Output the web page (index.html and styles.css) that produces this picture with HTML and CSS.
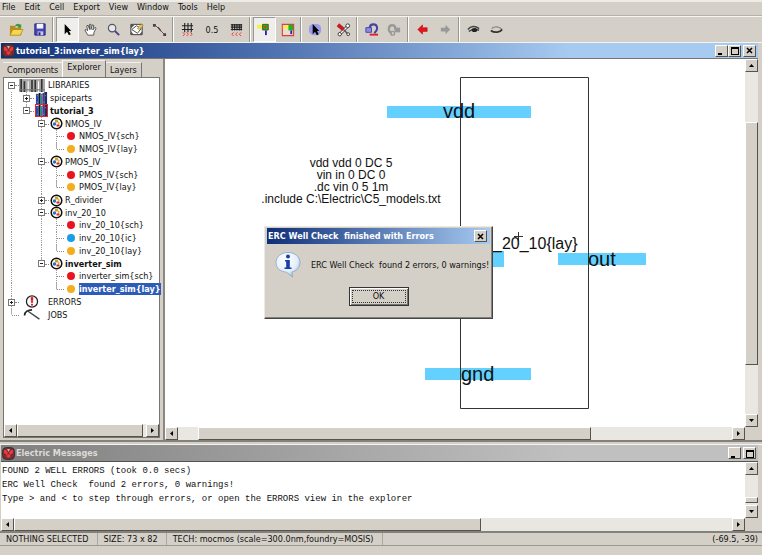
FILE: index.html
```html
<!DOCTYPE html>
<html lang="en">
<head>
<meta charset="utf-8">
<title>Electric</title>
<link rel="stylesheet" href="styles.css">
</head>
<body>
<svg class="defs" aria-hidden="true">
  <symbol id="cell" viewBox="0 0 13 13"><circle cx="6.500" cy="6.500" r="5.300" fill="#fff" stroke="#111" stroke-width="1.500"/><path d="M5 2.500h3v3H5z" fill="#c9a22e"/><circle cx="4.500" cy="7" r="1.700" fill="#2472c8"/><path d="M8 4l2 2-2 2z" fill="#d8b92c"/><path d="M6.500 7.500h3v2h-3z" fill="#e21c1c"/></symbol>
  <symbol id="books" viewBox="0 0 12 14"><path fill="#2347b8" d="M0 2h3v12H0z"/><path fill="#171717" d="M3 1h2v13H3z"/><path fill="#178a86" d="M5 2h2v12H5z"/><path fill="#602b91" d="M7 1h2v13H7z"/><path fill="#1a2c6c" d="M9 0h3v13H9z"/><path d="M1 4h1M6 4h1M10 4h1M1 11h1M8 11h1" stroke="#e09a36"/></symbol>
  <symbol id="logo" viewBox="0 0 13 13"><rect x=".5" y=".5" width="12" height="12" rx="4" fill="#7a2a30" stroke="#343434"/><path d="M2 3h2l2 3-1 2-3-2zM11 3H9L7 6l1 2 3-2z" fill="#f03838"/><path d="M5 2h3L6.500 5z" fill="#b9b9b9"/><path d="M4 9l2.500-2L9 9l-2.500 2z" fill="#f03838"/></symbol>
  <symbol id="au" viewBox="0 0 7 7"><path d="M1 5l2.500-3L6 5z"/></symbol>
  <symbol id="ad" viewBox="0 0 7 7"><path d="M1 2l2.500 3L6 2z"/></symbol>
  <symbol id="al" viewBox="0 0 7 7"><path d="M5 1L2 3.500 5 6z"/></symbol>
  <symbol id="ar" viewBox="0 0 7 7"><path d="M2 1l3 2.500L2 6z"/></symbol>
  <symbol id="min" viewBox="0 0 9 9"><path d="M1 7h4v2H1z"/></symbol>
  <symbol id="max" viewBox="0 0 9 9"><path d="M1 1h8v8H1zM2 3v5h6V3z" fill-rule="evenodd"/></symbol>
  <symbol id="cls" viewBox="0 0 9 9"><path d="M2 2l5 5M7 2L2 7" stroke="#000" stroke-width="1.500"/></symbol>
</svg>

<div class="app">
  <nav class="menubar" aria-label="Menu">
    <button>File</button><button>Edit</button><button>Cell</button><button>Export</button><button>View</button><button>Window</button><button>Tools</button><button>Help</button>
  </nav>

  <div class="toolbar" role="toolbar" aria-label="Tools">
    <button aria-label="Open"><svg viewBox="0 0 16 16"><path d="M1 4h5l1 2h6v8H1z" fill="#b98a1f"/><path d="M1 14l3-6h11l-3 6z" fill="#f4d84b" stroke="#a97c16" stroke-width=".7"/><path d="M6 5c1-3 4-4 6-2l1-1v4H9l1-1c-1-1-2-1-4 0z" fill="#3a9a35"/></svg></button>
    <button aria-label="Save"><svg viewBox="0 0 16 16"><path d="M3 2h11v12H3z" fill="#4646b4" stroke="#22227c"/><path d="M5 2h7v5H5z" fill="#f4f4ff"/><path d="M6 10h6v4H6z" fill="#c8c8ec"/><path d="M7 11h2v3H7z" fill="#22227c"/></svg></button>
    <span class="sep"></span>
    <button class="on" aria-label="Select"><svg viewBox="0 0 16 16"><path d="M5 2v11l2.500-2.500L9.500 14l2-1-2-3.500H12z"/></svg></button>
    <button aria-label="Pan"><svg viewBox="0 0 16 16"><path d="M5 14L2 8.500l1.500-.5L5 9.500 4 4l1.500-.5L7 8 7 2.500h1.500V8L10 3l1.500.5L10.500 8.500 13 5.500l1 1-2.500 5V14z" fill="#fff" stroke="#444" stroke-width=".9"/></svg></button>
    <button aria-label="Zoom"><svg viewBox="0 0 16 16"><circle cx="6.500" cy="6.500" r="4" fill="#e5e8f2" stroke="#555" stroke-width="1.200"/><path d="M9.500 9.500L14 14" stroke="#554488" stroke-width="2.200"/></svg></button>
    <button aria-label="Outline"><svg viewBox="0 0 16 16"><path d="M2 2.500h12v11H2z" fill="#fff" stroke="#333"/><path d="M3 8l5-4 5 3-4 5z" fill="#fff" stroke="#444"/><path d="M2 3h4L2 7zM2 13v-3l3 3zM14 13v-3l-3 3z" fill="#555"/><path d="M9 7l4-5 2 2-4 4z" fill="#f0c850" stroke="#8c7229" stroke-width=".6"/></svg></button>
    <button aria-label="Measure"><svg viewBox="0 0 16 16"><path d="M3 3l10 10" stroke="#a33" stroke-width="1"/><path d="M1 2h3v3H1zM12 12h3v3h-3zM6 6l1-1 3 4-1 1z" fill="#444"/></svg></button>
    <span class="sep"></span>
    <button aria-label="Grid coarser"><svg viewBox="0 0 16 16"><path d="M2 4h12M2 8h12M5 1v10M8.500 1v10M12 1v10" stroke="#222" stroke-width="1.200"/><path d="M3 11l2 2-2 2M7 11l2 2-2 2M11 11l2 2-2 2" fill="none" stroke="#e33"/></svg></button>
    <button class="wide">0.5</button>
    <button aria-label="Grid finer"><svg viewBox="0 0 16 16"><path d="M2 3h12M2 5.500h12M2 8h12M3.500 2v7M6 2v7M8.500 2v7M11 2v7M13 2v7" stroke="#222" stroke-width="1.200"/><path d="M5 11l-2 2 2 2M9 11l-2 2 2 2M13 11l-2 2 2 2" fill="none" stroke="#e33"/></svg></button>
    <span class="sep"></span>
    <button class="on" aria-label="Select objects"><svg viewBox="0 0 16 16"><path d="M0 3h7v4H0z" fill="#f5ef4b"/><path d="M6 2.500h6v6H6z" fill="#18b818" stroke="#6b4510"/><path d="M8 4.500h2v2H8z" fill="#e22"/><path d="M9.500 9v5" stroke="#2222c8" stroke-width="2"/></svg></button>
    <button aria-label="Select area"><svg viewBox="0 0 16 16"><path d="M2.500 2.500h12v12h-12z" fill="#e8dfcf" stroke="#e33b3b" stroke-width="1.200"/><path d="M3 4h6v3H3z" fill="#f5ef4b"/><path d="M9 3h5v6H9z" fill="#18b818"/><path d="M12 9v4" stroke="#2222c8" stroke-width="2"/></svg></button>
    <span class="sep"></span>
    <button aria-label="Special select"><svg viewBox="0 0 16 16"><rect x="1" y="2" width="13" height="12" rx="5" fill="#9b9bea"/><path d="M5 2v11l2.500-2.500L9.500 14l2-1-2-3.500H12z"/></svg></button>
    <span class="sep"></span>
    <button aria-label="Preferences"><svg viewBox="0 0 16 16"><path d="M12 5L4 13" stroke="#333" stroke-width="3"/><path d="M12 5L4 13" stroke="#fff" stroke-width="1.500"/><circle cx="12.500" cy="4" r="2" fill="#fff" stroke="#333"/><circle cx="4" cy="13" r="1.800" fill="#fff" stroke="#333"/><path d="M2 3l6 5" stroke="#c41b24" stroke-width="4"/><path d="M8 8l5 5" stroke="#555" stroke-width="1.500"/><circle cx="13" cy="13" r="1.500" fill="#fff" stroke="#333"/></svg></button>
    <span class="sep"></span>
    <button aria-label="Undo"><svg viewBox="0 0 16 16"><path d="M6 7c0-6 8-6 8 0 0 2-1 3-3 5" fill="none" stroke="#4343a5" stroke-width="2.200"/><path d="M2 6h6v5H2z" fill="#8b8be0" stroke="#4343a5"/><path d="M6 13.500h9" stroke="#e11d2c" stroke-width="2"/></svg></button>
    <button aria-label="Redo" disabled><svg viewBox="0 0 16 16"><path d="M9 8c0-6-7-6-7 0 0 2 1 3 3 4" fill="none" stroke="#999" stroke-width="2.500"/><path d="M8 6h6v5H8z" fill="#999"/><circle cx="6" cy="12" r="2" fill="none" stroke="#999" stroke-width="1.500"/></svg></button>
    <span class="sep"></span>
    <button aria-label="Back"><svg viewBox="0 0 16 16"><path d="M3 8l5-5v3h5v4H8v3z" fill="#e8101c" stroke="#a00" stroke-width=".5"/></svg></button>
    <button aria-label="Forward" disabled><svg viewBox="0 0 16 16"><path d="M13 8L8 3v3H3v4h5v3z" fill="#999"/></svg></button>
    <span class="sep"></span>
    <button aria-label="Expand"><svg viewBox="0 0 16 16"><path d="M2 8c3-4 8-4 12-1M3 10c3-2 7-3 11-1" fill="none" stroke="#444" stroke-width="1.500"/><ellipse cx="9" cy="8.500" rx="3" ry="2.200" fill="#222"/></svg></button>
    <button aria-label="Collapse"><svg viewBox="0 0 16 16"><path d="M3 7c3-3 8-2 11 1" fill="none" stroke="#888" stroke-width="1.500"/><path d="M2 9c4 3 10 2 12-1" fill="none" stroke="#333" stroke-width="2"/></svg></button>
  </div>

  <section class="window main">
    <header class="title">
      <svg class="logo"><use href="#logo"/></svg><h1>tutorial_3:inverter_sim{lay}</h1>
      <button aria-label="Minimize"><svg><use href="#min"/></svg></button><button aria-label="Maximize"><svg><use href="#max"/></svg></button><button class="apart" aria-label="Close"><svg><use href="#cls"/></svg></button>
    </header>
    <div class="split">
      <aside class="side">
        <div class="tabs" role="tablist"><button role="tab">Components</button><button role="tab" class="sel" aria-selected="true">Explorer</button><button role="tab">Layers</button></div>
        <div class="treebox">
          <ul class="tree">
            <li><i class="g b m"></i><svg class="libs" viewBox="0 0 24 12"><path d="M0 0h24v12H0z" fill="#aaa"/><path d="M2 0v12M5 2v10M12 1v11M15 1v11M21 0v12" stroke="#333" stroke-width="1.500"/><path d="M8.500 2v10M18 2v10" stroke="#fff"/><path d="M0 10h24" stroke="#777"/></svg><span>LIBRARIES</span></li>
            <li><i class="g v"></i><i class="g b p v"></i><svg class="ic"><use href="#books"/></svg><span>spiceparts</span></li>
            <li><i class="g v"></i><i class="g b m up"></i><svg class="ic cur"><use href="#books"/></svg><strong>tutorial_3</strong></li>
            <li><i class="g v"></i><i class="g"></i><i class="g b m v"></i><svg class="ic"><use href="#cell"/></svg><span>NMOS_IV</span></li>
            <li><i class="g v"></i><i class="g"></i><i class="g v"></i><i class="g v t"></i><i class="dot red"></i><span>NMOS_IV{sch}</span></li>
            <li><i class="g v"></i><i class="g"></i><i class="g v"></i><i class="g up t"></i><i class="dot gold"></i><span>NMOS_IV{lay}</span></li>
            <li><i class="g v"></i><i class="g"></i><i class="g b m v"></i><svg class="ic"><use href="#cell"/></svg><span>PMOS_IV</span></li>
            <li><i class="g v"></i><i class="g"></i><i class="g v"></i><i class="g v t"></i><i class="dot red"></i><span>PMOS_IV{sch}</span></li>
            <li><i class="g v"></i><i class="g"></i><i class="g v"></i><i class="g up t"></i><i class="dot gold"></i><span>PMOS_IV{lay}</span></li>
            <li><i class="g v"></i><i class="g"></i><i class="g b p v"></i><svg class="ic"><use href="#cell"/></svg><span>R_divider</span></li>
            <li><i class="g v"></i><i class="g"></i><i class="g b m v"></i><svg class="ic"><use href="#cell"/></svg><span>inv_20_10</span></li>
            <li><i class="g v"></i><i class="g"></i><i class="g v"></i><i class="g v t"></i><i class="dot red"></i><span>inv_20_10{sch}</span></li>
            <li><i class="g v"></i><i class="g"></i><i class="g v"></i><i class="g v t"></i><i class="dot blue"></i><span>inv_20_10{ic}</span></li>
            <li><i class="g v"></i><i class="g"></i><i class="g v"></i><i class="g up t"></i><i class="dot gold"></i><span>inv_20_10{lay}</span></li>
            <li><i class="g v"></i><i class="g"></i><i class="g b m up"></i><svg class="ic"><use href="#cell"/></svg><strong>inverter_sim</strong></li>
            <li><i class="g v"></i><i class="g"></i><i class="g"></i><i class="g v t"></i><i class="dot red"></i><span>inverter_sim{sch}</span></li>
            <li><i class="g v"></i><i class="g"></i><i class="g"></i><i class="g up t"></i><i class="dot gold"></i><strong class="picked">inverter_sim{lay}</strong></li>
            <li><i class="g b p v"></i><svg class="libs" viewBox="0 0 26 14"><circle cx="13" cy="7" r="6" fill="#fff" stroke="#222" stroke-width="1.400"/><path d="M11.800 2.500h2.400L13.600 8.500h-1.200z" fill="#e01818" stroke="#e01818" stroke-width=".5"/><circle cx="13" cy="10.500" r="1.200" fill="#e01818"/></svg><span>ERRORS</span></li>
            <li><i class="g up t"></i><svg class="libs" viewBox="0 0 26 14"><path d="M5 8c0-4 4-6 8-6" fill="none" stroke="#222" stroke-width="1.800"/><path d="M8 3l13 9" stroke="#444" stroke-width="1.500"/></svg><span>JOBS</span></li>
          </ul>
          <div class="bar h tb"><button aria-label="Scroll left"><svg><use href="#al"/></svg></button><div class="track"><i class="thumb"></i></div><button aria-label="Scroll right"><svg><use href="#ar"/></svg></button></div>
        </div>
      </aside>
      <div class="view">
        <svg class="canvas" role="img" aria-label="Layout">
          <g fill="#63d0fd"><path d="M222 47h144v12H222z"/><path d="M300 192h39v16h-39z"/><path d="M393 194h88v12h-88z"/><path d="M260 309h106v12H260z"/></g>
          <path d="M295.500 18.500h128v331h-128z" fill="none" stroke="#333"/>
          <path d="M353.500 173v9M349 177.500h9" stroke="#333"/>
          <g class="port"><text x="278" y="59">vdd</text><text x="423" y="207">out</text><text x="296" y="322">gnd</text></g>
          <text class="inst" x="328" y="190">_20_10{lay}</text>
          <g class="spice"><text x="186" y="108">vdd vdd 0 DC 5</text><text x="186" y="120">vin in 0 DC 0</text><text x="186" y="132">.dc vin 0 5 1m</text><text x="186" y="144">.include C:\Electric\C5_models.txt</text></g>
        </svg>
        <div class="bar mv"><button aria-label="Scroll up"><svg><use href="#au"/></svg></button><div class="track"><i class="thumb"></i></div><button aria-label="Scroll down"><svg><use href="#ad"/></svg></button></div>
        <div class="bar h mh"><button aria-label="Scroll left"><svg><use href="#al"/></svg></button><div class="track"><i class="thumb"></i></div><button aria-label="Scroll right"><svg><use href="#ar"/></svg></button></div>
      </div>
    </div>
  </section>

  <section class="window msgs">
    <header class="title idle">
      <svg class="logo"><use href="#logo"/></svg><h2>Electric Messages</h2>
      <button aria-label="Minimize"><svg><use href="#min"/></svg></button><button class="apart" aria-label="Maximize"><svg><use href="#max"/></svg></button>
    </header>
    <div class="log">
      <pre>FOUND 2 WELL ERRORS (took 0.0 secs)
ERC Well Check  found 2 errors, 0 warnings!
Type &gt; and &lt; to step through errors, or open the ERRORS view in the explorer</pre>
      <div class="bar lv"><button aria-label="Scroll up"><svg><use href="#au"/></svg></button><div class="track"><i class="thumb"></i></div><button aria-label="Scroll down"><svg><use href="#ad"/></svg></button></div>
      <div class="bar h lh"><button aria-label="Scroll left"><svg><use href="#al"/></svg></button><div class="track"><i class="thumb"></i></div><button aria-label="Scroll right"><svg><use href="#ar"/></svg></button></div>
    </div>
  </section>

  <footer class="status"><span>NOTHING SELECTED</span><span>SIZE: 73 x 82</span><span>TECH: mocmos (scale=300.0nm,foundry=MOSIS)</span><span class="pos">(-69.5, -39)</span></footer>

  <div class="dialog" role="alertdialog" aria-labelledby="dt">
    <header class="title"><h2 id="dt">ERC Well Check&nbsp; finished with Errors</h2><button aria-label="Close"><svg><use href="#cls"/></svg></button></header>
    <div class="body">
      <svg class="info" viewBox="0 0 26 26"><defs><radialGradient id="ig" cx=".4" cy=".3" r=".8"><stop offset="0" stop-color="#fff"/><stop offset=".6" stop-color="#e4effa"/><stop offset="1" stop-color="#88add8"/></radialGradient></defs><path d="M13 1c7 0 12 4.500 12 10 0 5-3.500 8.500-8 9.500l.5 5-6-4.800C5 20 1 16.500 1 11 1 5.500 6 1 13 1z" fill="url(#ig)" stroke="#8ba5c4" stroke-width=".8"/><circle cx="13" cy="5" r="2" fill="#173fa8"/><path d="M10 8.500h4.800V16H16.500v1.500h-7V16h1.700v-6H10z" fill="#173fa8"/></svg>
      <p>ERC Well Check&nbsp; found 2 errors, 0 warnings!</p>
    </div>
    <button class="ok"><span>OK</span></button>
  </div>
</div>
</body>
</html>
```
FILE: styles.css
```css
*, *::before, *::after { box-sizing: border-box; }
body {
  margin: 0;
  background: #d4d0c8;
  color: #111;
  font: 9px/12px "DejaVu Sans Condensed", "DejaVu Sans", sans-serif;
}
button { font: inherit; color: inherit; margin: 0; padding: 0; border: 0; background: none; }
h1, h2, p, pre, ul { margin: 0; padding: 0; }
h1, h2 { font-size: inherit; }
svg { display: block; }
.defs { position: absolute; width: 0; height: 0; }

.app { position: relative; min-height: 100vh; display: flex; flex-direction: column; }

.menubar { display: flex; align-items: flex-start; gap: 9px; height: 16px; padding: 0 2px; border-top: 2px solid #eeece6; border-bottom: 1px solid #b5b1a8; line-height: 11px; }
.toolbar { display: flex; align-items: stretch; height: 26px; padding-left: 5px; border-top: 1px solid #f6f5f1; }
.toolbar button { width: 23px; display: grid; place-items: center; }
.toolbar .wide { width: 26px; font-size: 9px; }
.toolbar svg { width: 15px; height: 15px; }
.toolbar .on { background: #f0eeea; border: 1px solid; border-color: #999 #fff #fff #999; }
.sep { width: 5px; background: linear-gradient(90deg, #d4d0c8 1px, #99968f 1px 2px, #fff 2px 3px, #d4d0c8 3px); }

.window { display: flex; flex-direction: column; padding: 0 4px 0 1px; border-top: 1px solid #f4f3ef; border-bottom: 2px solid #83817a; }
.main { flex: 1; }
.title {
  display: flex; align-items: center; height: 16px; padding: 0 2px 0 1px;
  background: linear-gradient(90deg, #0f2f78, #4d70b0 35%, #a6caf0 75%); color: #fff;
}
.main .title { height: 15px; }
.title h1, .title h2 { flex: 1; white-space: nowrap; }
.title .logo { width: 13px; height: 13px; margin-right: 1px; }
.title button { width: 13px; height: 12px; display: grid; place-items: center; }
.title button svg { width: 9px; height: 9px; }
.title .apart { margin-left: 2px; }
.msgs .idle { background: linear-gradient(90deg, #808080, #c0c0c0 75%); color: #dedbd5; }
.title button, .bar button, .thumb, .ok { background: #d4d0c8; border: 1px solid; border-color: #fff #55534e #55534e #fff; }

.split { flex: 1; display: flex; border-top: 1px solid #77756f; }
.side { width: 164px; padding: 1px 3px 2px 2px; display: flex; flex-direction: column; border-right: 2px solid #8a8881; }
.tabs { display: flex; align-items: flex-end; height: 17px; }
.tabs button { height: 15px; padding: 0 4px; border-top: 1px solid #f2f0ec; border-right: 1px solid #77756f; }
.tabs button:first-child { border-right: 0; }
.tabs .sel { height: 17px; padding-bottom: 4px; border-left: 1px solid #fff; }
.treebox { flex: 1; display: flex; flex-direction: column; justify-content: space-between; background: #fff; border: 1px solid #77756f; }
.tree { list-style: none; display: grid; grid-template-rows: repeat(19, 1fr); height: 243px; padding: 1px 0 0; }
.tree li { display: flex; align-items: center; min-height: 0; white-space: nowrap; }
.g { position: relative; flex: none; width: 15px; align-self: stretch; background: repeat-y 7px 0 / 1px 2px; }
.v { background-image: linear-gradient(#999 50%, transparent 50%); }
.up { background: linear-gradient(#aaa, #aaa) 7px 0 / 1px 50% no-repeat; }
.t::before { content: ""; position: absolute; left: 8px; right: 0; top: 50%; border-top: 1px dotted #888; }
.b::before { content: ""; position: absolute; left: 11px; right: 0; top: 50%; border-top: 1px dotted #888; }
.b::after { content: ""; position: absolute; left: 4px; top: 3px; width: 7px; height: 7px; border: 1px solid #777; background: linear-gradient(#222, #222) center / 3px 1px no-repeat #fff; }
.p::after { background: linear-gradient(#222, #222) center / 3px 1px no-repeat, linear-gradient(#222, #222) center / 1px 3px no-repeat #fff; }
.libs { flex: none; width: 26px; height: 13px; margin-right: 3px; }
.ic { flex: none; width: 13px; height: 13px; margin: 0 2px 0 1px; }
.cur { outline: 1px solid #e22; outline-offset: -1px; }
.dot { flex: none; width: 8px; height: 8px; margin: 0 4px 0 3px; border-radius: 50%; }
.red { background: #e81420; }
.gold { background: #f2ae1c; }
.blue { background: #189ee8; }
.picked { background: #2c5cb8; color: #fff; }

.bar { display: flex; flex-direction: column; background: #e9e7e2; }
.bar.h { flex-direction: row; }
.bar button { flex: none; width: 13px; height: 13px; display: grid; place-items: center; }
.bar button svg { width: 7px; height: 7px; }
.track { flex: 1; display: flex; flex-direction: inherit; }
.thumb { display: block; }
.tb .thumb { width: 98%; }
.mv .thumb { margin-top: 50px; height: 71%; }
.mh .thumb { margin-left: 20px; width: 71%; }
.lv .thumb { margin-top: 22px; height: 6px; }
.lh .thumb { width: 65%; }

.view, .log { display: grid; grid-template-columns: minmax(0, 1fr) 13px; grid-template-rows: minmax(0, 1fr) 13px; }
.view { flex: 1; min-width: 0; }
.canvas { width: 100%; height: 100%; background: #fff; fill: #111; font-family: "Liberation Sans", Arial, sans-serif; }
.port { font-size: 20px; }
.inst { font-size: 16px; }
.spice { font-size: 12px; text-anchor: middle; }

.msgs { margin-top: 2px; }
.log { height: 70px; border-top: 1px solid #55534e; }
.log pre { background: #fff; padding: 2px 1px; font: 9px/14px "Liberation Mono", "Courier New", monospace; overflow: hidden; }

.status { display: flex; height: 13px; padding-right: 4px; margin-bottom: 9px; border-bottom: 1px solid #9b9890; }
.status span { padding: 0 8px 0 6px; border-right: 1px solid #aaa79f; white-space: nowrap; }
.status .pos { margin-left: auto; padding: 0; border: 0; }

.dialog { position: absolute; left: 264px; top: 226px; width: 229px; background: #d4d0c8; border: 1px solid; border-color: #eceae5 #444 #444 #eceae5; padding: 1px 2px 12px; box-shadow: inset -1px -1px #85827b; }
.dialog .title { padding-right: 3px; background: linear-gradient(90deg, #0f2f78, #a6caf0); }
.body { display: flex; align-items: center; gap: 10px; padding: 7px 8px 9px; }
.body p { white-space: nowrap; }
.info { flex: none; width: 26px; height: 27px; }
.ok { display: block; width: 60px; height: 19px; margin: 0 auto; padding: 2px; outline: 1px solid #333; outline-offset: -1px; box-shadow: inset 1px 1px #fff, inset -1px -1px #77756f; }
.ok span { display: block; border: 1px dotted #333; line-height: 11px; }
```
